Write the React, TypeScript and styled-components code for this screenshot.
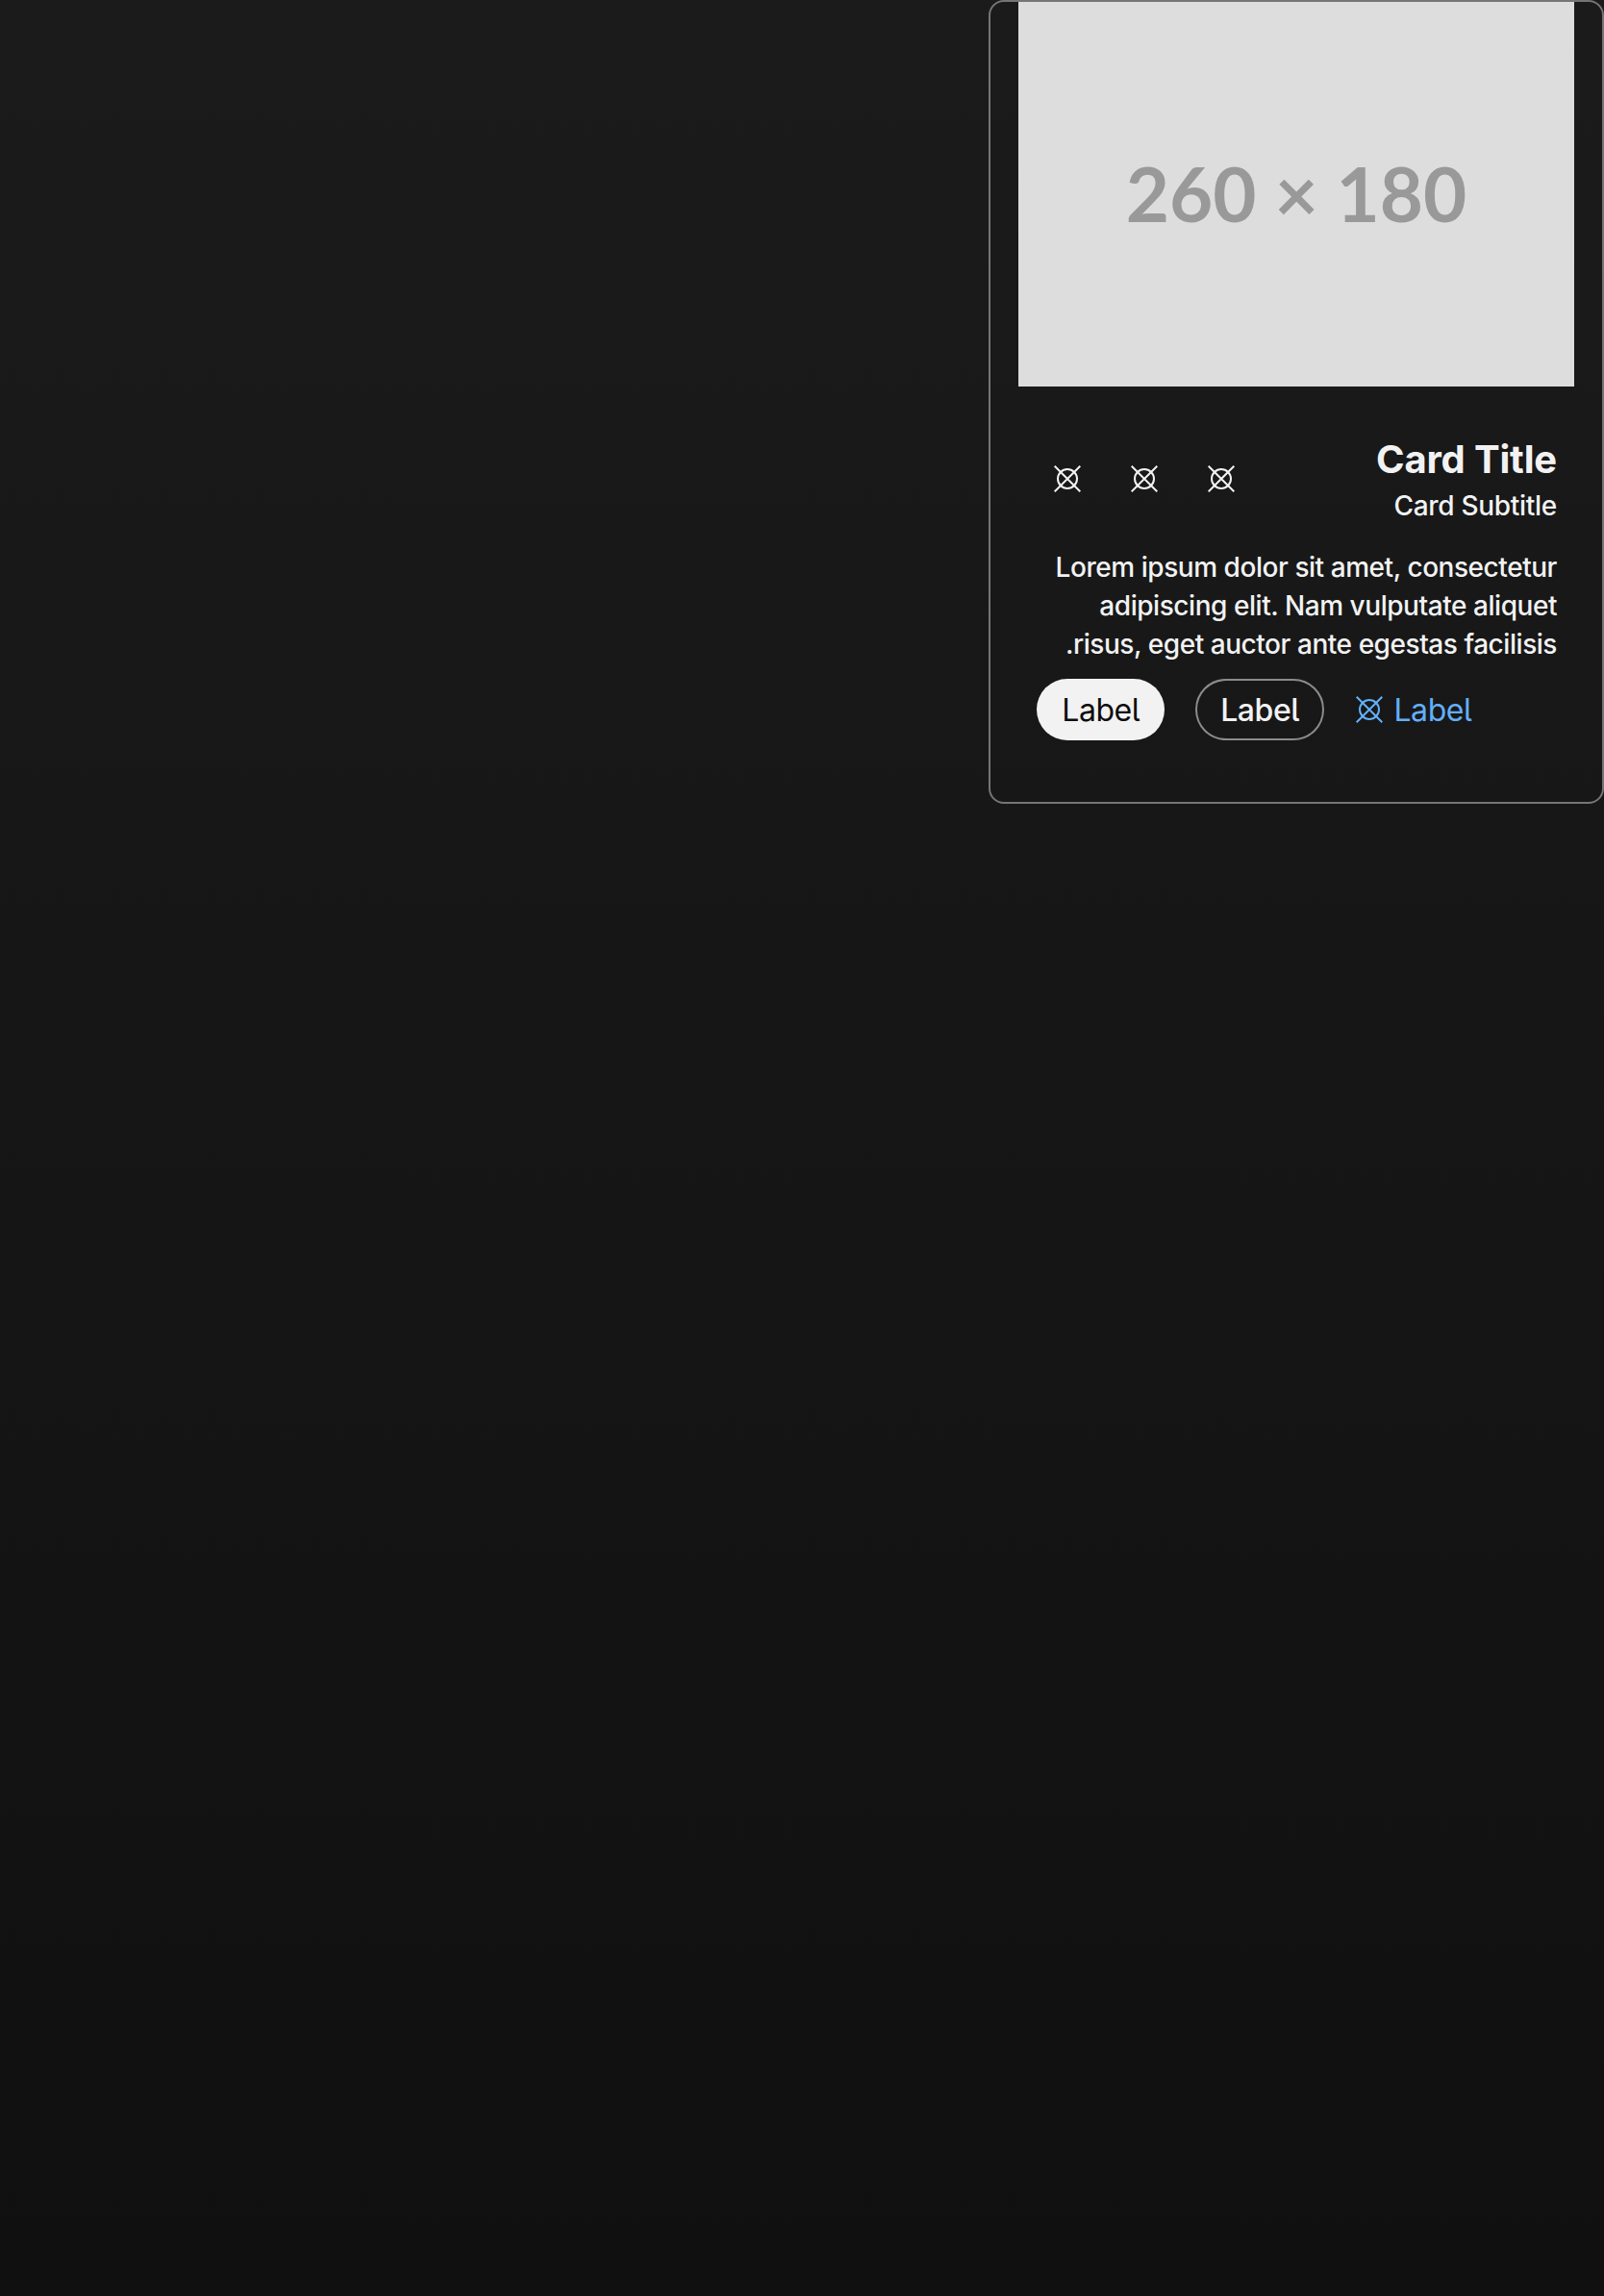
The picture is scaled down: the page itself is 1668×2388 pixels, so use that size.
import React from "react";
import styled, { createGlobalStyle } from "styled-components";

const GlobalStyle = createGlobalStyle`
  *, *::before, *::after { box-sizing: border-box; }
  html, body { margin: 0; padding: 0; }
  body {
    min-height: 2388px;
    background: linear-gradient(180deg, #1b1b1b 0%, #101010 100%);
    font-family: Inter, "Liberation Sans", sans-serif;
    color: #f2f2f2;
    overflow: hidden;
  }
`;

const Page = styled.main`
  display: flex;
  align-items: flex-start;
  width: 1668px;
  height: 2388px;
`;

const Card = styled.article`
  display: flex;
  flex-direction: column;
  align-items: center;
  width: 640px;
  height: 836px;
  border: 2px solid #757575;
  border-radius: 16px;
`;

const Media = styled.div`
  display: flex;
  align-items: center;
  justify-content: center;
  flex: none;
  width: 577.78px;
  height: 400px;
  padding-bottom: 3px;
  background: #ddd;
  color: #999;
  font: 700 78px/1 Lato, sans-serif;
`;

const Content = styled.section`
  display: flex;
  flex-direction: column;
  width: 100%;
  padding: 50px 47px 0 48px;
`;

const Header = styled.header`
  display: flex;
  justify-content: space-between;
  align-items: flex-start;
  height: 108px;
`;

const Title = styled.h2`
  margin: 0;
  font-size: 40px;
  line-height: 52px;
  font-weight: 700;
  letter-spacing: -0.18px;
`;

const Subtitle = styled.p`
  margin: 2px 0 0;
  font-size: 28px;
  line-height: 40px;
  font-weight: 500;
  letter-spacing: -0.3px;
`;

const Actions = styled.div`
  display: flex;
  margin-left: -8px;
  padding-top: 6px;
`;

const IconButton = styled.button`
  display: grid;
  place-items: center;
  width: 80px;
  height: 80px;
  padding: 0;
  border: 0;
  background: none;
  color: inherit;
`;

const Body = styled.p`
  margin: 10px 0 0;
  font-size: 28px;
  line-height: 40px;
  font-weight: 500;
  letter-spacing: -0.45px;
`;

const Footer = styled.footer`
  display: flex;
  gap: 32px;
  margin-top: 16px;
`;

const Button = styled.button<{ $variant: "filled" | "outlined" | "link" }>`
  display: flex;
  align-items: center;
  justify-content: center;
  gap: 11.5px;
  width: ${(p) => (p.$variant === "link" ? "auto" : "133.4px")};
  height: 64px;
  padding: ${(p) => (p.$variant === "link" ? "2px 0 0 1.2px" : "2px 0 0")};
  border: ${(p) => (p.$variant === "outlined" ? "2px solid #8b8b8b" : "0")};
  border-radius: 32px;
  background: ${(p) => (p.$variant === "filled" ? "#f2f2f2" : "none")};
  color: ${(p) => ({ filled: "#0d0d0d", outlined: "#f2f2f2", link: "#62b0f8" })[p.$variant]};
  font-family: inherit;
  font-size: 32px;
  line-height: 40px;
  font-weight: ${(p) => (p.$variant === "outlined" ? 500 : 400)};
  letter-spacing: -0.45px;
  font-feature-settings: "cv05";

  svg {
    margin-top: -2px;
  }
`;

const PlaceholderIcon = () => (
  <svg width="28" height="28" viewBox="0 0 28 28" fill="none" stroke="currentColor" strokeWidth="2">
    <circle cx="14" cy="14" r="10" />
    <path d="M.7.7 27.3 27.3M27.3.7.7 27.3" />
  </svg>
);

export default function App() {
  return (
    <>
      <GlobalStyle />
      <Page dir="rtl">
        <Card>
          <Media dir="ltr">260 × 180</Media>
          <Content>
            <Header>
              <div>
                <Title>Card Title</Title>
                <Subtitle>Card Subtitle</Subtitle>
              </div>
              <Actions>
                {[0, 1, 2].map((i) => (
                  <IconButton key={i} aria-label="Action">
                    <PlaceholderIcon />
                  </IconButton>
                ))}
              </Actions>
            </Header>
            <Body>
              Lorem ipsum dolor sit amet, consectetur
              <br />
              adipiscing elit. Nam vulputate aliquet
              <br />
              risus, eget auctor ante egestas facilisis.
            </Body>
            <Footer dir="ltr">
              <Button $variant="filled">Label</Button>
              <Button $variant="outlined">Label</Button>
              <Button $variant="link">
                <PlaceholderIcon />
                Label
              </Button>
            </Footer>
          </Content>
        </Card>
      </Page>
    </>
  );
}
